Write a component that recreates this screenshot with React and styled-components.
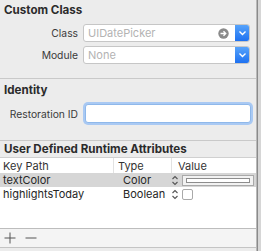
import React from 'react';
import styled, { createGlobalStyle } from 'styled-components';

const Global = createGlobalStyle`
  html, body { margin: 0; padding: 0; background: #ececec; }
  body { font-family: Inter, "Noto Sans", "Liberation Sans", sans-serif; font-size: 11px; color: #262626; }
`;

const Frame = styled.div`
  display: flex;
  width: 261px;
  height: 251px;
  overflow: hidden;
`;

const Panel = styled.div`
  width: 256px;
  display: flex;
  flex-direction: column;
  background: #ececec;
  border-right: 1px solid #b9b9b9;
`;

const Gutter = styled.div`
  flex: 1;
  background: #d6d6d6;
  border-left: 1px solid #8a8a8a;
`;

const Section = styled.div`
  padding: ${p => p.pad || '3px 6px 0 4px'};
  height: ${p => p.h}px;
  box-sizing: border-box;
  border-bottom: ${p => (p.noBorder ? 'none' : '1px solid #c9c9c9')};
  display: flex;
  flex-direction: column;
  flex-shrink: 0;
`;

const Title = styled.div`
  font-weight: 700;
  font-size: 11.6px;
  line-height: ${p => p.lh || 14}px;
  color: #2b2b2b;
`;

const Rows = styled.div`
  display: flex;
  flex-direction: column;
  gap: 4px;
  margin-top: ${p => p.top || 7}px;
`;

const Row = styled.div`
  display: flex;
  align-items: center;
  gap: 5px;
`;

const Label = styled.div`
  width: 74px;
  text-align: right;
  color: #3a3a3a;
  font-size: 10.3px;
`;

const Combo = styled.div`
  flex: 1;
  height: 18px;
  display: flex;
  box-sizing: border-box;
  border: 1px solid #c6c6c6;
  border-radius: 3px;
  background: #fff;
  overflow: hidden;
`;

const ComboText = styled.div`
  flex: 1;
  display: flex;
  align-items: center;
  justify-content: space-between;
  padding: 0 6px 0 4px;
  color: #b3b3b3;
  font-size: 11px;
`;

const ArrowBtn = styled.div`
  width: 15px;
  display: flex;
  align-items: center;
  justify-content: center;
  background: linear-gradient(#5aa6fb, #1a6ef0);
  margin: -1px -1px -1px 0;
`;

const TextField = styled.div`
  flex: 1;
  height: 19px;
  box-sizing: border-box;
  background: #fff;
  border: 1px solid #8fb8ea;
  border-radius: 3px;
  box-shadow: 0 0 0 2px #a9c9f3;
  margin-left: 2px;
  margin-right: -1px;
`;

const Table = styled.div`
  flex: 1;
  background: #fff;
  border-top: 1px solid #d0d0d0;
  border-bottom: 1px solid #bdbdbd;
  display: flex;
  flex-direction: column;
`;

const TRow = styled.div`
  display: grid;
  grid-template-columns: 113px 58px 1fr;
  height: ${p => p.h || 14}px;
  align-items: center;
  background: ${p => (p.selected ? '#d6d6d6' : 'transparent')};
`;

const HeadCell = styled.div`
  height: 100%;
  display: flex;
  align-items: center;
  padding-left: ${p => p.pl || 3}px;
  border-left: ${p => (p.first ? 'none' : '1px solid #e2e2e2')};
  color: #333;
  font-size: 11px;
`;

const Cell = styled.div`
  display: flex;
  align-items: center;
  padding-left: ${p => p.pl || 0}px;
  gap: ${p => p.gap || 0}px;
  color: #262626;
  font-size: 11px;
  white-space: nowrap;
`;

const ColorWell = styled.div`
  width: 72px;
  height: 11px;
  box-sizing: border-box;
  border: 1px solid #a9a9a9;
  background: #f2f2f2;
  display: flex;
  align-items: center;
  padding: 0 3px;
`;

const WellInner = styled.div`
  flex: 1;
  height: 3px;
  border: 1px solid #8d8d8d;
  background: #fff;
`;

const Check = styled.div`
  width: 11px;
  height: 11px;
  box-sizing: border-box;
  border: 1px solid #a9a9a9;
  border-radius: 2px;
  background: #fff;
`;

const Footer = styled.div`
  height: 18px;
  display: flex;
  align-items: center;
  gap: 9px;
  padding-left: 4px;
  background: #f4f4f4;
  border-bottom: 1px solid #c4c4c4;
  flex-shrink: 0;
`;

const BottomGap = styled.div`
  height: 3px;
  flex-shrink: 0;
`;

const Stepper = () => (
  <svg width="8" height="11" viewBox="0 0 8 11">
    <path d="M1.5 4 L4 1.5 L6.5 4 M1.5 7 L4 9.5 L6.5 7" fill="none" stroke="#555" strokeWidth="1.1" />
  </svg>
);

const Chevron = () => (
  <svg width="9" height="6" viewBox="0 0 9 6">
    <path d="M1.5 1.5 L4.5 4.5 L7.5 1.5" fill="none" stroke="#fff" strokeWidth="1.4" />
  </svg>
);

const GoIcon = () => (
  <svg width="11" height="11" viewBox="0 0 11 11">
    <circle cx="5.5" cy="5.5" r="5.2" fill="#8a8a8a" />
    <path d="M2.5 5.5 H7.5 M5.5 3.3 L7.7 5.5 L5.5 7.7" fill="none" stroke="#fff" strokeWidth="1.4" />
  </svg>
);

const IconBtn = ({ minus }) => (
  <svg width="12" height="12" viewBox="0 0 12 12">
    <path d={minus ? 'M0.5 6 H11.5' : 'M0.5 6 H11.5 M6 0.5 V11.5'} stroke="#555" strokeWidth="1" />
  </svg>
);

const App = () => (
  <Frame>
    <Global />
    <Panel>
      <Section h={79}>
        <Title>Custom Class</Title>
        <Rows>
          <Row>
            <Label>Class</Label>
            <Combo>
              <ComboText>UIDatePicker<GoIcon /></ComboText>
              <ArrowBtn><Chevron /></ArrowBtn>
            </Combo>
          </Row>
          <Row>
            <Label>Module</Label>
            <Combo>
              <ComboText>None</ComboText>
              <ArrowBtn><Chevron /></ArrowBtn>
            </Combo>
          </Row>
        </Rows>
      </Section>
      <Section h={62} pad="4px 6px 0 4px">
        <Title>Identity</Title>
        <Rows top={7}>
          <Row>
            <Label>Restoration ID</Label>
            <TextField />
          </Row>
        </Rows>
      </Section>
      <Section h={16} pad="0 6px 0 4px" noBorder>
        <Title lh={16}>User Defined Runtime Attributes</Title>
      </Section>
      <Table>
        <TRow h={15}>
          <HeadCell first>Key Path</HeadCell>
          <HeadCell pl={4}>Type</HeadCell>
          <HeadCell pl={6}>Value</HeadCell>
        </TRow>
        <TRow selected>
          <Cell pl={3}>textColor</Cell>
          <Cell pl={10}>Color</Cell>
          <Cell gap={3}><Stepper /><ColorWell><WellInner /></ColorWell></Cell>
        </TRow>
        <TRow>
          <Cell pl={3}>highlightsToday</Cell>
          <Cell pl={10}>Boolean</Cell>
          <Cell gap={3}><Stepper /><Check /></Cell>
        </TRow>
      </Table>
      <Footer>
        <IconBtn />
        <IconBtn minus />
      </Footer>
      <BottomGap />
    </Panel>
    <Gutter />
  </Frame>
);

export default App;
